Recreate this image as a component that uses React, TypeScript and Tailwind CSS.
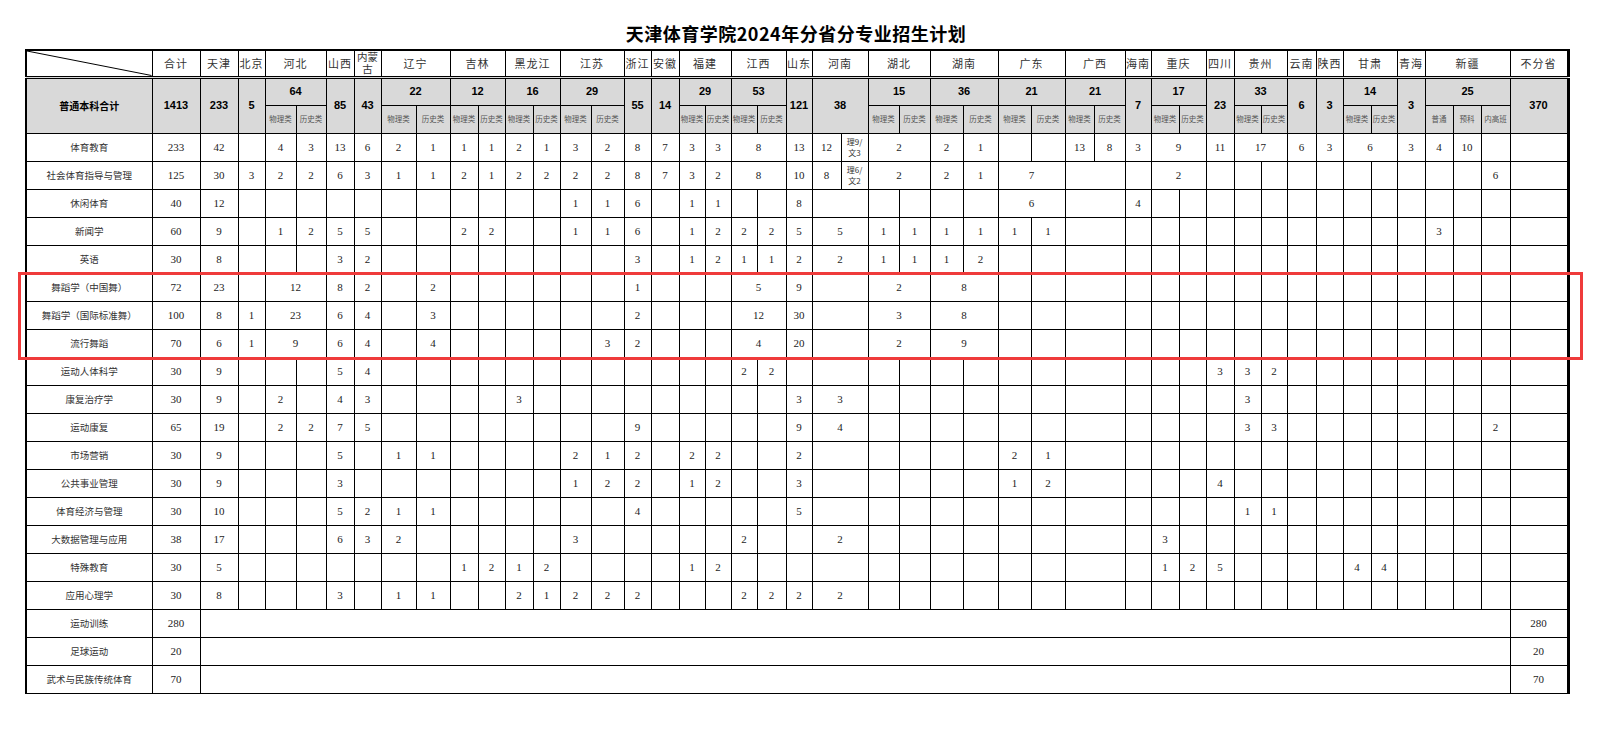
import React from 'react'

// column widths (leaf columns of the sheet), left label column first
const COL_W = [
  'w-[126px]', 'w-[48px]', 'w-[38px]', 'w-[27px]', 'w-[31px]', 'w-[30px]', 'w-[28px]', 'w-[27px]',
  'w-[35px]', 'w-[34px]', 'w-[28px]', 'w-[27px]', 'w-[28px]', 'w-[27px]', 'w-[31px]', 'w-[33px]',
  'w-[27px]', 'w-[28px]', 'w-[26px]', 'w-[26px]', 'w-[26px]', 'w-[29px]', 'w-[26px]', 'w-[29px]',
  'w-[27px]', 'w-[31px]', 'w-[31px]', 'w-[33px]', 'w-[35px]', 'w-[33px]', 'w-[34px]', 'w-[29px]',
  'w-[31px]', 'w-[26px]', 'w-[28px]', 'w-[27px]', 'w-[28px]', 'w-[27px]', 'w-[26px]', 'w-[29px]',
  'w-[27px]', 'w-[28px]', 'w-[26px]', 'w-[28px]', 'w-[28px]', 'w-[28px]', 'w-[29px]', 'w-[58px]',
]

const PH = ['物理类', '历史类']

type Group = { name: string; total: string; sub?: string[]; span?: number }

const GROUPS: Group[] = [
  { name: '合计', total: '1413' },
  { name: '天津', total: '233' },
  { name: '北京', total: '5' },
  { name: '河北', total: '64', sub: PH },
  { name: '山西', total: '85' },
  { name: '内蒙古', total: '43' },
  { name: '辽宁', total: '22', sub: PH },
  { name: '吉林', total: '12', sub: PH },
  { name: '黑龙江', total: '16', sub: PH },
  { name: '江苏', total: '29', sub: PH },
  { name: '浙江', total: '55' },
  { name: '安徽', total: '14' },
  { name: '福建', total: '29', sub: PH },
  { name: '江西', total: '53', sub: PH },
  { name: '山东', total: '121' },
  { name: '河南', total: '38', span: 2 },
  { name: '湖北', total: '15', sub: PH },
  { name: '湖南', total: '36', sub: PH },
  { name: '广东', total: '21', sub: PH },
  { name: '广西', total: '21', sub: PH },
  { name: '海南', total: '7' },
  { name: '重庆', total: '17', sub: PH },
  { name: '四川', total: '23' },
  { name: '贵州', total: '33', sub: PH },
  { name: '云南', total: '6' },
  { name: '陕西', total: '3' },
  { name: '甘肃', total: '14', sub: PH },
  { name: '青海', total: '3' },
  { name: '新疆', total: '25', sub: ['普通', '预科', '内高班'] },
  { name: '不分省', total: '370' },
]

// values for leaf columns 1..47, grouped by province; "." = empty
// m = leaf indices where a 2-column merged cell starts
const STD = [23, 31]
const DANCE = [4, 20, 23, 25, 27, 31]
const ROWS: { name: string; v: string; m: number[] }[] = [
  { name: '体育教育', m: [20, 25, 34, 37, 41], v: '233 42 . | 4 3 | 13 6 | 2 1 | 1 1 | 2 1 | 3 2 | 8 7 | 3 3 | 8 . | 13 | 12 理9/文3 | 2 . | 2 1 | . . | 13 8 | 3 | 9 . | 11 | 17 . | 6 3 | 6 . | 3 | 4 10 . | .' },
  { name: '社会体育指导与管理', m: [20, 25, 29, 31, 34], v: '125 30 3 | 2 2 | 6 3 | 1 1 | 2 1 | 2 2 | 2 2 | 8 7 | 3 2 | 8 . | 10 | 8 理6/文2 | 2 . | 2 1 | 7 . | . . | . | 2 . | . | . . | . . | . . | . | . . 6 | .' },
  { name: '休闲体育', m: [23, 29, 31], v: '40 12 . | . . | . . | . . | . . | . . | 1 1 | 6 . | 1 1 | . . | 8 | . . | . . | . . | 6 . | . . | 4 | . . | . | . . | . . | . . | . | . . . | .' },
  { name: '新闻学', m: STD, v: '60 9 . | 1 2 | 5 5 | . . | 2 2 | . . | 1 1 | 6 . | 1 2 | 2 2 | 5 | 5 . | 1 1 | 1 1 | 1 1 | . . | . | . . | . | . . | . . | . . | . | 3 . . | .' },
  { name: '英语', m: STD, v: '30 8 . | . . | 3 2 | . . | . . | . . | . . | 3 . | 1 2 | 1 1 | 2 | 2 . | 1 1 | 1 2 | . . | . . | . | . . | . | . . | . . | . . | . | . . . | .' },
  { name: '舞蹈学（中国舞）', m: DANCE, v: '72 23 . | 12 . | 8 2 | . 2 | . . | . . | . . | 1 . | . . | 5 . | 9 | . . | 2 . | 8 . | . . | . . | . | . . | . | . . | . . | . . | . | . . . | .' },
  { name: '舞蹈学（国际标准舞）', m: DANCE, v: '100 8 1 | 23 . | 6 4 | . 3 | . . | . . | . . | 2 . | . . | 12 . | 30 | . . | 3 . | 8 . | . . | . . | . | . . | . | . . | . . | . . | . | . . . | .' },
  { name: '流行舞蹈', m: DANCE, v: '70 6 1 | 9 . | 6 4 | . 4 | . . | . . | . 3 | 2 . | . . | 4 . | 20 | . . | 2 . | 9 . | . . | . . | . | . . | . | . . | . . | . . | . | . . . | .' },
  { name: '运动人体科学', m: STD, v: '30 9 . | . . | 5 4 | . . | . . | . . | . . | . . | . . | 2 2 | . | . . | . . | . . | . . | . . | . | . . | 3 | 3 2 | . . | . . | . | . . . | .' },
  { name: '康复治疗学', m: STD, v: '30 9 . | 2 . | 4 3 | . . | . . | 3 . | . . | . . | . . | . . | 3 | 3 . | . . | . . | . . | . . | . | . . | . | 3 . | . . | . . | . | . . . | .' },
  { name: '运动康复', m: STD, v: '65 19 . | 2 2 | 7 5 | . . | . . | . . | . . | 9 . | . . | . . | 9 | 4 . | . . | . . | . . | . . | . | . . | . | 3 3 | . . | . . | . | . . 2 | .' },
  { name: '市场营销', m: STD, v: '30 9 . | . . | 5 . | 1 1 | . . | . . | 2 1 | 2 . | 2 2 | . . | 2 | . . | . . | . . | 2 1 | . . | . | . . | . | . . | . . | . . | . | . . . | .' },
  { name: '公共事业管理', m: STD, v: '30 9 . | . . | 3 . | . . | . . | . . | 1 2 | 2 . | 1 2 | . . | 3 | . . | . . | . . | 1 2 | . . | . | . . | 4 | . . | . . | . . | . | . . . | .' },
  { name: '体育经济与管理', m: STD, v: '30 10 . | . . | 5 2 | 1 1 | . . | . . | . . | 4 . | . . | . . | 5 | . . | . . | . . | . . | . . | . | . . | . | 1 1 | . . | . . | . | . . . | .' },
  { name: '大数据管理与应用', m: STD, v: '38 17 . | . . | 6 3 | 2 . | . . | . . | 3 . | . . | . . | 2 . | . | 2 . | . . | . . | . . | . . | . | 3 . | . | . . | . . | . . | . | . . . | .' },
  { name: '特殊教育', m: STD, v: '30 5 . | . . | . . | . . | 1 2 | 1 2 | . . | . . | 1 2 | . . | . | . . | . . | . . | . . | . . | . | 1 2 | 5 | . . | . . | 4 4 | . | . . . | .' },
  { name: '应用心理学', m: STD, v: '30 8 . | . . | 3 . | 1 1 | . . | 2 1 | 2 2 | 2 . | . . | 2 2 | 2 | 2 . | . . | . . | . . | . . | . | . . | . | . . | . . | . . | . | . . . | .' },
]

const NATIONAL = [
  { name: '运动训练', n: '280' },
  { name: '足球运动', n: '20' },
  { name: '武术与民族传统体育', n: '70' },
]

const td = 'border border-black p-0 text-center align-middle'
const num = "font-['Liberation_Serif','Noto_Sans_CJK_SC',serif] text-[11px] text-[#1c1c1c]"
const cjk = "font-['Noto_Sans_CJK_SC',sans-serif] text-[#333]"
const bold = "font-['Liberation_Sans_Narrow','Liberation_Sans','Noto_Sans_CJK_SC',sans-serif] font-bold text-[11px] text-black"

function Value({ v }: { v: string }) {
  if (v.includes('/')) {
    const [a, b] = v.split('/')
    return (
      <div className="font-['Noto_Sans_CJK_SC',sans-serif] text-[8px] leading-[11px] text-[#333]">
        <div>{a}/</div>
        <div>{b}</div>
      </div>
    )
  }
  return <>{v}</>
}

function BodyRow({ name, v, m }: { name: string; v: string; m: number[] }) {
  const vals = v.replace(/\|/g, ' ').split(/\s+/).filter(Boolean).map(t => (t === '.' ? '' : t))
  const cells: React.ReactNode[] = []
  for (let i = 1; i <= 47; i++) {
    const span = m.includes(i) ? 2 : 1
    cells.push(
      <td key={i} colSpan={span} className={`${td} ${num}`}>
        <Value v={vals[i - 1] ?? ''} />
      </td>
    )
    if (span === 2) i++
  }
  return (
    <tr className="h-[28px]">
      <td className={`${td} ${cjk} text-[9.5px]`}>{name}</td>
      {cells}
    </tr>
  )
}

export default function App() {
  return (
    <div className="relative w-[1604px] h-[735px] bg-white overflow-hidden pt-[19px] pl-[25px]">
      <div className="w-[1542px] h-[28px] text-center leading-[28px] font-['Noto_Sans_CJK_SC',sans-serif] font-bold text-[18px] tracking-[0.5px] text-black">
        天津体育学院2024年分省分专业招生计划
      </div>

      <table className="mt-[2px] w-[1542px] table-fixed border-collapse border-l-2 border-t-2 border-r-[3px] border-black">
        <colgroup>
          {COL_W.map((w, i) => (
            <col key={i} className={w} />
          ))}
        </colgroup>
        <tbody>
          <tr className="h-[27px]">
            <td className={`${td} relative border-b-[3px] [border-bottom-style:double]`}>
              <svg className="absolute inset-0 w-full h-full" preserveAspectRatio="none" viewBox="0 0 100 100">
                <line x1="0" y1="0" x2="100" y2="100" stroke="black" strokeWidth="1" vectorEffect="non-scaling-stroke" />
              </svg>
            </td>
            {GROUPS.map(g => (
              <td
                key={g.name}
                colSpan={g.sub?.length ?? g.span ?? 1}
                className={`${td} ${cjk} border-b-[3px] [border-bottom-style:double] text-[11px] ${g.name === '内蒙古' ? '' : 'tracking-[1px]'}`}
              >
                {g.name === '内蒙古' ? (
                  <div className="leading-[12px] text-[10.5px]">
                    <div>内蒙</div>
                    <div>古</div>
                  </div>
                ) : (
                  g.name
                )}
              </td>
            ))}
          </tr>

          <tr className="h-[28px] bg-[#d9d9d9]">
            <td rowSpan={2} className={`${td} font-['Noto_Sans_CJK_SC',sans-serif] font-bold text-[10px] text-black`}>
              普通本科合计
            </td>
            {GROUPS.map(g => (
              <td
                key={g.name}
                colSpan={g.sub?.length ?? g.span ?? 1}
                rowSpan={g.sub ? 1 : 2}
                className={`${td} ${bold}`}
              >
                {g.total}
              </td>
            ))}
          </tr>

          <tr className="h-[28px] bg-[#d9d9d9]">
            {GROUPS.filter(g => g.sub).flatMap(g =>
              g.sub!.map(s => (
                <td key={g.name + s} className={`${td} ${cjk} text-[7.5px] text-[#555]`}>
                  {s}
                </td>
              ))
            )}
          </tr>

          {ROWS.map(r => (
            <BodyRow key={r.name} {...r} />
          ))}

          {NATIONAL.map(r => (
            <tr key={r.name} className="h-[28px]">
              <td className={`${td} ${cjk} text-[9.5px]`}>{r.name}</td>
              <td className={`${td} ${num}`}>{r.n}</td>
              <td colSpan={45} className={td}></td>
              <td className={`${td} ${num}`}>{r.n}</td>
            </tr>
          ))}
        </tbody>
      </table>

      {/* red highlight round the dance rows */}
      <div className="absolute left-[18px] top-[272px] w-[1565px] h-[88px] border-[3px] border-[#ef3b3b] pointer-events-none" />
    </div>
  )
}
